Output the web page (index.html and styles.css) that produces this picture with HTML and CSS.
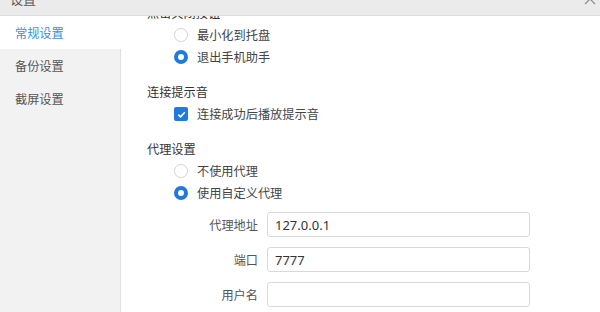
FILE: index.html
```html
<!DOCTYPE html>
<html>
    <head>
        <meta charset="utf-8">
        <title>设置</title>
        <link rel="stylesheet" href="styles.css">
    </head>
    <body>
        <div id="titlebar">
            <span class="title">设置</span>
            <svg class="close" width="12" height="12" viewBox="0 0 12 12">
                <path d="M1 1L11 11M11 1L1 11" stroke="#8a8a8a" stroke-width="1.2" fill="none"/>
            </svg>
        </div>
        <div id="window">
            <ul id="menu">
                <li class="active">常规设置</li>
                <li>备份设置</li>
                <li>截屏设置</li>
            </ul>
            <div id="panel">
                <div class="scroller">
                    <div class="group">
                        <h4>点击关闭按钮</h4>
                        <label class="option"><span class="radio"></span>最小化到托盘</label>
                        <label class="option"><span class="radio checked"></span>退出手机助手</label>
                    </div>
                    <div class="group">
                        <h4>连接提示音</h4>
                        <label class="option">
                            <span class="checkbox">
                                <svg width="9" height="9" viewBox="0 0 9 9"><path d="M1.3 4.6L3.6 6.8L7.8 2.3" stroke="#fff" stroke-width="1.6" fill="none"/></svg>
                            </span>连接成功后播放提示音
                        </label>
                    </div>
                    <div class="group">
                        <h4>代理设置</h4>
                        <label class="option"><span class="radio"></span>不使用代理</label>
                        <label class="option"><span class="radio checked"></span>使用自定义代理</label>
                        <div class="form">
                            <div class="field"><label>代理地址</label><input type="text" value="127.0.0.1"></div>
                            <div class="field"><label>端口</label><input type="text" value="7777"></div>
                            <div class="field"><label>用户名</label><input type="text" value=""></div>
                        </div>
                    </div>
                </div>
            </div>
        </div>
    </body>
</html>
```

FILE: styles.css
```css
body {
    margin: 0;
    font-family: "Noto Sans CJK SC", "Noto Sans", sans-serif;
    font-size: 12.2px;
    color: #333;
    background-color: #fff;
    overflow: hidden;
    height: 312px;
}
#titlebar {
    height: 15px;
    background-color: #ebebeb;
    border-bottom: 1px solid #dcdcdc;
    display: flex;
    justify-content: space-between;
    overflow: hidden;
}
#titlebar .title {
    margin-top: -13px;
    margin-left: 10px;
    line-height: 24px;
    font-size: 13px;
    color: #555;
}
#titlebar .close {
    margin-top: -7px;
    margin-right: 4px;
}
#window {
    display: flex;
    height: 296px;
}
#menu {
    list-style: none;
    margin: 0;
    padding: 0;
    width: 120px;
    flex-shrink: 0;
    background-color: #f2f2f2;
    border-right: 1px solid #e0e0e0;
}
#menu li {
    height: 33px;
    line-height: 34px;
    padding-left: 15px;
    color: #555;
}
#menu li.active {
    background-color: #fff;
    color: #3a8ee6;
    margin-right: -1px;
}
#panel {
    flex: 1;
    overflow: hidden;
}
.scroller {
    margin-top: -14px;
    padding-left: 26px;
}
.group {
    padding-bottom: 13px;
}
h4 {
    margin: 0;
    font-size: inherit;
    font-weight: normal;
    line-height: 22px;
    color: #333;
}
.option {
    display: flex;
    align-items: center;
    height: 22px;
    padding-left: 27px;
    color: #444;
}
.radio {
    width: 12px;
    height: 12px;
    border: 1px solid #d4d4d4;
    border-radius: 50%;
    margin-right: 9px;
    background-color: #fff;
}
.radio.checked {
    width: 6px;
    height: 6px;
    border: 4px solid #1f7ae0;
}
.checkbox {
    width: 14px;
    height: 14px;
    border-radius: 2px;
    background-color: #1f7ae0;
    margin-right: 9px;
    display: flex;
    align-items: center;
    justify-content: center;
}
.form {
    margin-top: 8px;
    display: flex;
    flex-direction: column;
    gap: 10px;
}
.field {
    display: flex;
    align-items: center;
}
.field label {
    width: 111px;
    text-align: right;
    margin-right: 9px;
    color: #555;
}
.field input {
    width: 263px;
    height: 25px;
    box-sizing: border-box;
    border: 1px solid #d9d9d9;
    border-radius: 3px;
    padding: 0 7px;
    font-family: "Noto Sans", "Noto Sans CJK SC", sans-serif;
    font-size: 13px;
    color: #333;
    outline: none;
}
```
